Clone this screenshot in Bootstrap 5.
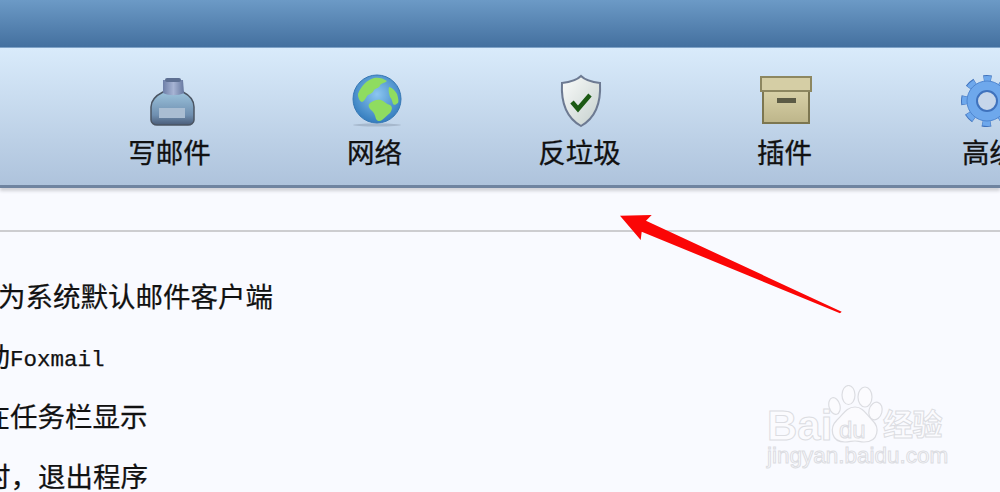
<!DOCTYPE html>
<html lang="zh-CN">
  <head>
    <meta charset="UTF-8" />
    <meta name="viewport" content="width=device-width, initial-scale=1" />
    <title>Foxmail</title>
    <link href="https://cdn.jsdelivr.net/npm/bootstrap@5.3.0/dist/css/bootstrap.min.css" rel="stylesheet" />
    <script defer src="https://cdn.jsdelivr.net/npm/bootstrap@5.3.0/dist/js/bootstrap.bundle.min.js"></script>
    <style>
      html, body { height: 100%; }
      body {
        background: #f9faff;
        overflow: hidden;
        font-family: "Liberation Sans", "Noto Sans CJK SC", sans-serif;
        color: #111;
      }
      .fm-stage { position: relative; width: 1000px; height: 492px; overflow: hidden; }
      .fm-title { height: 47px; background: linear-gradient(#6c9ac6, #44709f); border-bottom: 1px solid #7fa3c8; box-sizing: content-box; }
      .fm-tools {
        height: 140px;
        padding-left: 67px;
        background: linear-gradient(#d9ebfb, #aec3dc);
        border-bottom: 3px solid #6f84a0;
        box-shadow: 0 3px 3px rgba(120, 120, 125, .3);
      }
      .fm-tool {
        flex: 0 0 205px;
        height: 137px;
        padding-top: 26px;
        font-size: 27.5px;
        line-height: 36px;
        -webkit-text-stroke: .3px #111;
      }
      .fm-tool svg { display: block; height: 54px; width: 54px; margin-bottom: 8px; }
      .fm-tool svg.fm-ic1 { margin-left: 2px; }
      .fm-tool svg.fm-ic2 { margin-left: 4px; }
      .fm-tool svg.fm-ic3 { margin-left: 3px; }
      .fm-tool svg.fm-ic5 { margin-right: 5px; }
      .fm-rule { height: 44px; border-bottom: 2px solid #cdcdd0; }
      .fm-opts {
        font-size: 27.5px;
        line-height: 60px;
        padding-top: 36px;
        white-space: nowrap;
        -webkit-text-stroke: .25px #111;
      }
      .fm-opt { height: 60px; }
      .fm-latin { font-family: "Liberation Mono", monospace; font-size: 22.5px; vertical-align: 1px; }
      .fm-cut1 { margin-left: -29.5px; }
      .fm-cut2 { margin-left: -45px; }
      .fm-cut3 { margin-left: -17.5px; }
      .fm-cut4 { margin-left: -17px; }
      .fm-arrow { position: absolute; left: 610px; top: 200px; }
      .fm-mark { position: absolute; left: 767px; top: 385px; width: 190px; height: 90px; }
      .fm-mark span {
        position: absolute;
        color: #fbfbfe;
        -webkit-text-stroke: 1px #dcdde2;
        white-space: nowrap;
        line-height: 1;
      }
      .fm-bai { left: 0; top: 20px; font-size: 42px; font-weight: 700; }
      .fm-du { left: 72px; top: 33px; font-size: 24px; font-weight: 400; }
      .fm-jy { left: 116px; top: 25px; font-size: 30px; letter-spacing: -.5px; font-weight: 700; }
      .fm-url { left: 0; top: 60px; font-size: 22.5px; }
      .fm-mark svg { position: absolute; left: 61px; top: 0; }
    </style>
  </head>
  <body>
    <div class="fm-stage">
      <div class="fm-title"></div>
      <div class="fm-tools d-flex">
        <div class="fm-tool d-flex flex-column align-items-center">
          <svg class="fm-ic1" viewBox="0 0 54 54">
            <defs>
              <linearGradient id="ink" x1="0" y1="0" x2="0" y2="1"><stop offset="0" stop-color="#9cc3dc"/><stop offset=".7" stop-color="#6f8fb0"/><stop offset="1" stop-color="#4a5c78"/></linearGradient>
              <linearGradient id="neck" x1="0" y1="0" x2="1" y2="0"><stop offset="0" stop-color="#6d7fa8"/><stop offset=".5" stop-color="#a7b4d4"/><stop offset="1" stop-color="#65779f"/></linearGradient>
            </defs>
            <path d="M7 33c0-8 6-12 12-15h20c6 3 11 7 11 15v13c0 3-3 5-6 5H13c-3 0-6-2-6-5z" fill="url(#ink)" stroke="#4b5563" stroke-width="1.5"/>
            <path d="M19 6h20l1 13c-6 3-15 3-21 0z" fill="url(#neck)"/>
            <rect x="21" y="4" width="16" height="4" rx="2" fill="#5d6f92"/>
            <rect x="15" y="34" width="26" height="10" fill="#a9bdd2"/>
          </svg>
          <div>写邮件</div>
        </div>
        <div class="fm-tool d-flex flex-column align-items-center">
          <svg class="fm-ic2" viewBox="0 0 54 54">
            <defs>
              <radialGradient id="sea" cx=".5" cy=".4" r=".65"><stop offset="0" stop-color="#8cc6f0"/><stop offset="1" stop-color="#2c76ba"/></radialGradient>
            </defs>
            <ellipse cx="27" cy="51" rx="24" ry="1.5" fill="#8b9bb0" opacity=".5"/>
            <circle cx="27" cy="25" r="24" fill="url(#sea)" stroke="#3778b4"/>
            <g fill="#8fdc60">
              <path d="M8 20C11 12 17 6 24 4c4-1 9 0 13 3-2 2-5 2-7 4 0 3-4 3-6 5-1 3-4 4-6 5-2 2-3 6-6 7-3-1-4-5-4-8z"/>
              <path d="M19 30c3-3 8-5 12-4 3 1 5 4 9 5 3 2 2 5 0 8-3 2-5 5-8 7-2 2-5 1-6-1-1-4-2-7-5-9-2-2-3-4-2-6z"/>
              <path d="M39 13c4 1 6 4 8 7 1 3 2 7 1 9-2 1-3 3-5 1-1-3-1-5-3-7-1-3-2-7-1-10z"/>
            </g>
          </svg>
          <div>网络</div>
        </div>
        <div class="fm-tool d-flex flex-column align-items-center">
          <svg class="fm-ic3" viewBox="0 0 54 54">
            <defs>
              <linearGradient id="shield" x1="0" y1="0" x2="1" y2="1"><stop offset="0" stop-color="#fbfcfb"/><stop offset="1" stop-color="#c4cfcc"/></linearGradient>
            </defs>
            <path d="M27 2c4 4 10 6 19 7 1 18-3 34-19 43C11 43 7 27 8 9c9-1 15-3 19-7z" fill="url(#shield)" stroke="#6d7a92" stroke-width="2"/>
            <path d="M18 28l6 7 12-14" fill="none" stroke="#1c5a14" stroke-width="4.5"/>
          </svg>
          <div>反垃圾</div>
        </div>
        <div class="fm-tool d-flex flex-column align-items-center">
          <svg class="fm-ic3" viewBox="0 0 54 54">
            <defs>
              <linearGradient id="box" x1="0" y1="0" x2="0" y2="1"><stop offset="0" stop-color="#d8d1a7"/><stop offset="1" stop-color="#bdb58a"/></linearGradient>
            </defs>
            <rect x="4" y="17" width="46" height="32" fill="url(#box)" stroke="#7c7650" stroke-width="2"/>
            <rect x="2" y="3" width="50" height="14" fill="#d5cea5" stroke="#8d8760" stroke-width="2"/>
            <rect x="18" y="24" width="19" height="5" fill="#5c5b45"/>
          </svg>
          <div>插件</div>
        </div>
        <div class="fm-tool d-flex flex-column align-items-center">
          <svg class="fm-ic5" viewBox="0 0 54 54">
            <circle cx="27" cy="27" r="22" fill="none" stroke="#3f72bd" stroke-width="8" stroke-dasharray="8.6 8.68" stroke-dashoffset="4.3" transform="rotate(-90 27 27)"/>
            <circle cx="27" cy="27" r="21.5" fill="none" stroke="#6ea8ec" stroke-width="7" stroke-dasharray="7.6 9.29" stroke-dashoffset="3.8" transform="rotate(-90 27 27)"/>
            <circle cx="27" cy="27" r="20" fill="#6ea8ec" stroke="#4f86d0"/>
            <circle cx="27" cy="27" r="10" fill="#c6d6ea" stroke="#3f72bd" stroke-width="2"/>
          </svg>
          <div>高级</div>
        </div>
      </div>
      <div class="fm-rule"></div>
      <div class="fm-opts">
        <div class="fm-opt"><span class="fm-cut1 d-inline-block">设为系统默认邮件客户端</span></div>
        <div class="fm-opt"><span class="fm-cut2 d-inline-block">启动<span class="fm-latin">Foxmail</span></span></div>
        <div class="fm-opt"><span class="fm-cut3 d-inline-block">在任务栏显示</span></div>
        <div class="fm-opt"><span class="fm-cut4 d-inline-block">时&#xFF0C;退出程序</span></div>
      </div>
      <svg class="fm-arrow" width="240" height="120" viewBox="0 0 240 120">
        <path d="M10 15.7L41.7 15 36 20.7 231.7 111.7 230 113.3 31.7 31.7 30.7 40z" fill="#fb0606"/>
      </svg>
      <div class="fm-mark">
        <svg width="56" height="58" viewBox="0 0 56 58" fill="#fbfbfe" stroke="#dcdde2" stroke-width="1.2">
          <ellipse cx="6.5" cy="21" rx="5.5" ry="8.5" transform="rotate(-15 6.5 21)"/>
          <ellipse cx="20.5" cy="10" rx="6.5" ry="9.5"/>
          <ellipse cx="37" cy="12" rx="7" ry="10"/>
          <ellipse cx="47.5" cy="26" rx="6.5" ry="9" transform="rotate(15 47.5 26)"/>
          <path d="M27 22c8 0 11 7 17 13 8 7 7 22-8 22-4 0-6-1-9-1s-6 1-10 1c-14 0-16-14-8-22 6-5 9-13 18-13z"/>
        </svg>
        <span class="fm-bai">Bai</span>
        <span class="fm-du">du</span>
        <span class="fm-jy">经验</span>
        <span class="fm-url">jingyan.baidu.com</span>
      </div>
    </div>
  </body>
</html>
